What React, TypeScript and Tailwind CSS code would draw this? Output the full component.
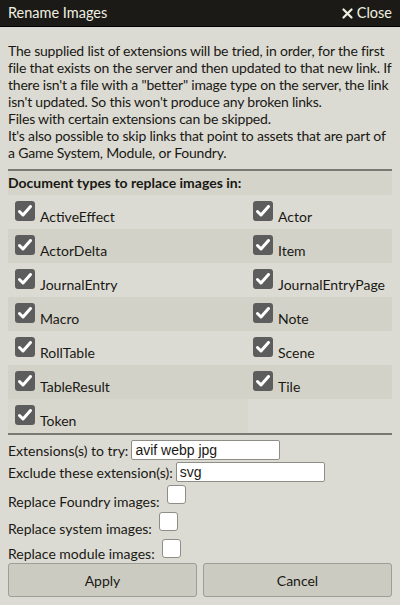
import { useState } from "react";

const types: [string, string | null][] = [
  ["ActiveEffect", "Actor"],
  ["ActorDelta", "Item"],
  ["JournalEntry", "JournalEntryPage"],
  ["Macro", "Note"],
  ["RollTable", "Scene"],
  ["TableResult", "Tile"],
  ["Token", null],
];

function Check({ label, on }: { label: string; on: boolean }) {
  const [checked, setChecked] = useState(on);
  return (
    <label className="flex items-start gap-[5px] h-[34px] pt-[6px] cursor-pointer">
      <span
        onClick={() => setChecked(!checked)}
        className="w-[20px] h-[20px] rounded-[3px] bg-[#5d5d5d] flex items-center justify-center shrink-0"
      >
        {checked && (
          <svg width="14" height="12" viewBox="0 0 14 12">
            <path d="M1.5 6.5 L5 10 L12.5 1.5" fill="none" stroke="white" strokeWidth="3" strokeLinecap="round" strokeLinejoin="round" />
          </svg>
        )}
      </span>
      <span className="mt-[7px] text-[14px] leading-[17px]">{label}</span>
    </label>
  );
}

function Box() {
  return <span className="inline-block w-[19px] h-[19px] bg-white border border-[#8e8d86] rounded-[3px] ml-[7px]" />;
}

export default function App() {
  return (
    <div className="w-[400px] h-[605px] bg-[#dcdbd3] text-[#191813] flex flex-col overflow-hidden" style={{ fontFamily: 'Lato, "Noto Sans", sans-serif' }}>
      {/* header */}
      <div className="h-[27px] bg-[#1b1a17] border-b border-black flex items-center justify-between px-[8px] text-[#f0f0e0] text-[14.5px]">
        <span>Rename Images</span>
        <span className="flex items-center gap-[4px]">
          <svg width="11" height="11" viewBox="0 0 11 11">
            <path d="M1.5 1.5 L9.5 9.5 M9.5 1.5 L1.5 9.5" stroke="#f0f0e0" strokeWidth="2.2" strokeLinecap="round" />
          </svg>
          Close
        </span>
      </div>

      <div className="flex-1 px-[8px] pt-[15px] flex flex-col">
        <p className="text-[14px] leading-[17px] tracking-[-0.2px] whitespace-nowrap">
          The supplied list of extensions will be tried, in order, for the first
          <br />
          file that exists on the server and then updated to that new link. If
          <br />
          there isn't a file with a "better" image type on the server, the link
          <br />
          isn't updated. So this won't produce any broken links.
          <br />
          Files with certain extensions can be skipped.
          <br />
          It's also possible to skip links that point to assets that are part of
          <br />
          a Game System, Module, or Foundry.
        </p>

        <div className="border-t-2 border-[#7a7971] mt-[8px]" />
        <div className="bg-[#d5d4cb] h-[24px] font-bold text-[14px] leading-[24px]">Document types to replace images in:</div>

        <div className="grid grid-cols-[240px_1fr]">
          {types.map(([a, b], i) => (
            <div key={a} className="contents">
              <div className={`pl-[7px] ${i % 2 === 1 ? "bg-[#d3d2c9]" : i === 6 ? "bg-[#d8d7ce]" : ""}`}>
                <Check label={a} on />
              </div>
              <div className={`pl-[5px] ${i % 2 === 1 ? "bg-[#d3d2c9]" : ""}`}>{b && <Check label={b} on />}</div>
            </div>
          ))}
        </div>

        <div className="border-t-2 border-[#7a7971]" />

        <div className="text-[14px] flex flex-col mt-[4px]">
          <div className="flex items-center h-[22px]">
            <span>Extensions(s) to try:</span>
            <input
              defaultValue="avif webp jpg"
              className="ml-[3px] w-[149px] h-[20px] bg-white border border-[#8e8d86] rounded-[2px] px-[3px] text-[14px] outline-none"
              style={{ fontFamily: '"Liberation Sans", Arial, sans-serif' }}
            />
          </div>
          <div className="flex items-center h-[22px]">
            <span>Exclude these extension(s):</span>
            <input
              defaultValue="svg"
              className="ml-[3px] w-[149px] h-[20px] bg-white border border-[#8e8d86] rounded-[2px] px-[3px] text-[14px] outline-none"
              style={{ fontFamily: '"Liberation Sans", Arial, sans-serif' }}
            />
          </div>
          <div className="flex items-end h-[27px]">
            <span className="leading-[17px]">Replace Foundry images:</span>
            <span className="self-start mt-[2px]"><Box /></span>
          </div>
          <div className="flex items-end h-[27px]">
            <span className="leading-[17px]">Replace system images:</span>
            <span className="self-start mt-[2px]"><Box /></span>
          </div>
          <div className="flex items-end h-[26px]">
            <span className="leading-[17px] mb-[1px]">Replace module images:</span>
            <span className="self-start mt-[2px]"><Box /></span>
          </div>
        </div>

        <div className="flex gap-[6px]">
          <button className="flex-1 h-[34px] bg-[#cccbc2] border border-[#9f9e96] rounded-[3px] text-[14px]">Apply</button>
          <button className="flex-1 h-[34px] bg-[#cccbc2] border border-[#9f9e96] rounded-[3px] text-[14px]">Cancel</button>
        </div>
      </div>
    </div>
  );
}
